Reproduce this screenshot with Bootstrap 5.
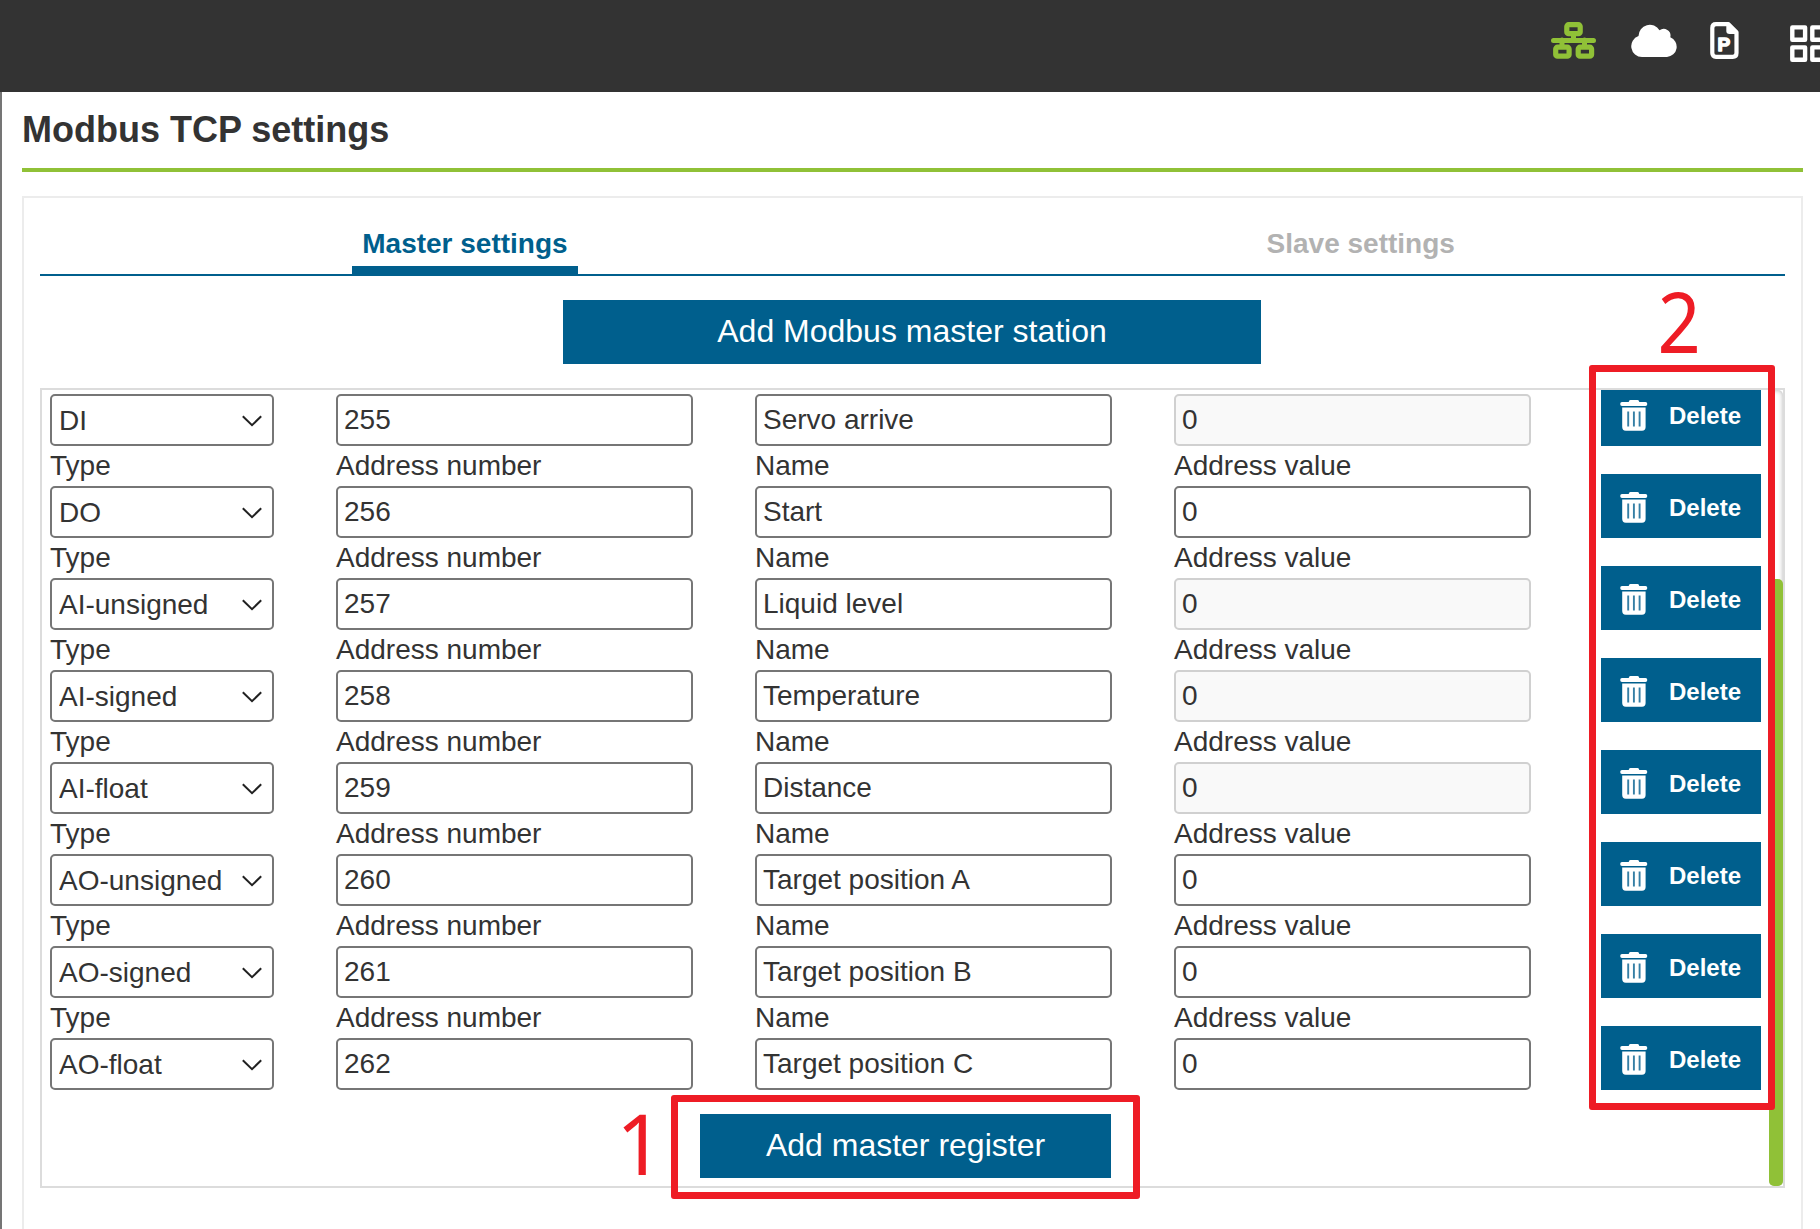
<!DOCTYPE html>
<html lang="en">
<head>
<meta charset="utf-8">
<title>Modbus TCP settings</title>
<link href="https://cdn.jsdelivr.net/npm/bootstrap@5.3.0/dist/css/bootstrap.min.css" rel="stylesheet">
<style>
:root{--blue:#005f8d;--green:#90c137;--ink:#333;--red:#ee1c25}
body{font-family:"Liberation Sans",Arial,sans-serif;font-size:28px;line-height:40px;color:var(--ink);background:#fff;width:1820px;height:1229px}
.topbar{height:92px;background:#333;flex:none}
.topbar svg{display:block;flex:none}
.topicons{padding:22px 0 0 1551px}
.icon-cloud{margin:2px 0 0 35px}
.icon-file{margin-left:32px}
.icon-grid{margin:3px 0 0 51px}
.page-main{border-left:2px solid #757575;padding:0 17px 0 20px;height:1137px}
.page-title{font-size:36px;font-weight:700;line-height:40px;padding:18px 0 18px;border-bottom:4px solid var(--green)}
.panel{border:2px solid #ececec;border-bottom:0;margin-top:24px;padding:26px 16px 0;height:1040px}
.tabline{border-bottom:2px solid var(--blue);height:52px}
.tabline .nav-item{flex:0 0 50%;max-width:50%}
.tabline .nav-item:first-child{padding-right:22px}
.tabline .nav-item:last-child{padding-left:26px}
.tabline .nav-link{color:#b2b2b2;font-weight:700;padding:0 12px 2px 10px;height:50px;line-height:40px;border-radius:0}
.tabline .nav-link.active{color:var(--blue);border-bottom:8px solid var(--blue);width:226px}
.btn-blue,.btn-blue:hover{background:var(--blue);color:#fff;border:0;border-radius:0;font-size:32px;line-height:40px;height:64px;padding:0 0 3px}
.add-station{width:698px;margin:24px 0 0 523px}
.add-register{width:411px;margin:24px 0 0 658px}
.listbox{border:2px solid #dcdcdc;height:800px;margin-top:24px}
.rows{margin-top:-36px;padding-left:8px}
.reg{height:92px;gap:62px}
.reg label{height:40px;line-height:40px;display:block}
.reg:first-child label{visibility:hidden}
.reg .form-control,.reg .form-select{height:52px;border:2px solid #767676;border-radius:5px;font-size:28px;line-height:46px;color:var(--ink);padding:0 6px;background-color:#fff}
.reg .form-control{width:357px}
.reg .form-control:disabled{background:#f9f9f9;border-color:#d0d0d0}
.reg .form-select{width:224px;padding:1px 0 0 7px;background-image:url("data:image/svg+xml,%3Csvg xmlns='http://www.w3.org/2000/svg' viewBox='0 0 20 12'%3E%3Cpath d='M.8 1.2 10 10.2 19.2 1.2' fill='none' stroke='%23222' stroke-width='2'/%3E%3C/svg%3E");background-size:20px 12px;background-position:190px 19px}
.reg .btn-blue{width:160px;font-size:24px;font-weight:700;margin:28px 0 0 8px;padding:2px 0 0 19px;gap:21px}
.reg .btn-blue span{padding-top:2px}
.track{right:0;top:0;width:14px;height:796px;border-radius:5px;box-shadow:inset 0 0 5px rgba(0,0,0,.3)}
.thumb{margin-top:189px;height:607px;border-radius:5px;background:var(--green)}
.callout-box{border:7px solid var(--red);border-radius:3px}
.box-one{left:671px;top:1095px;width:469px;height:104px}
.box-two{left:1589px;top:365px;width:186px;height:745px}
.digit{font:84px/84px "Noto Sans",sans-serif;color:var(--red)}
.digit-one{left:616px;top:1101px}
.digit-two{left:1655px;top:279px;transform:scaleX(.9)}
</style>
<script src="https://cdn.jsdelivr.net/npm/bootstrap@5.3.0/dist/js/bootstrap.bundle.min.js"></script>
</head>
<body class="position-relative overflow-hidden">
<header class="topbar overflow-hidden">
  <div class="topicons d-flex align-items-start">
    <svg width="45" height="37" viewBox="0 0 45 37" fill="none" stroke="#90c137"><path d="M2.500 18.500h40M22.500 12v6M11 18v6M33.500 18v6" stroke-width="5" stroke-linecap="round"/><g stroke-width="5.200" stroke-linejoin="round"><rect x="15.800" y="2.700" width="13.400" height="9" rx="1.800"/><rect x="4.700" y="25.200" width="13.400" height="9" rx="1.800"/><rect x="27.200" y="25.200" width="13.400" height="9" rx="1.800"/></g></svg>
    <svg class="icon-cloud" width="47" height="33" viewBox="0 0 47 33" fill="#fff"><path d="M11 33A10.800 10.800 0 0 1 7.500 12 11.300 11.300 0 0 1 28.500 6.300 6.800 6.800 0 0 1 39.300 13.200 10.300 10.300 0 0 1 36 33Z"/></svg>
    <svg class="icon-file" width="29" height="37" viewBox="0 0 29 37"><path d="M6 2.200H18.500L26.500 10.200V31Q26.500 34.800 22.700 34.800H6Q2.300 34.800 2.300 31V6Q2.300 2.200 6 2.200Z" fill="none" stroke="#fff" stroke-width="4.200" stroke-linejoin="round"/><path d="M16.300 1H19L28 10V12H19.500Q16.300 12 16.300 9Z" fill="#fff"/><text x="7.500" y="29" font-family="Liberation Sans" font-size="19" font-weight="700" fill="#fff" stroke="#fff" stroke-width="1.400" stroke-linejoin="round">P</text></svg>
    <svg class="icon-grid" width="38" height="37" viewBox="0 0 38 37" fill="none" stroke="#fff" stroke-width="4.400" stroke-linejoin="round"><rect x="2.300" y="2.400" width="12.800" height="12.300"/><rect x="22.300" y="2.400" width="12.800" height="12.300"/><rect x="2.300" y="22.400" width="12.800" height="12.300"/><rect x="22.300" y="22.400" width="12.800" height="12.300"/></svg>
  </div>
</header>
<main class="page-main">
  <h1 class="page-title m-0">Modbus TCP settings</h1>
  <section class="panel">
    <ul class="nav tabline">
      <li class="nav-item d-flex justify-content-center"><a class="nav-link active text-nowrap">Master settings</a></li>
      <li class="nav-item d-flex justify-content-center"><a class="nav-link text-nowrap">Slave settings</a></li>
    </ul>
    <button class="btn btn-blue add-station d-block">Add Modbus master station</button>
    <div class="listbox position-relative overflow-hidden">
      <div class="rows" id="rows"></div>
      <button class="btn btn-blue add-register d-block">Add master register</button>
      <div class="track position-absolute"><div class="thumb"></div></div>
    </div>
  </section>
</main>
<div class="callout-box box-one position-absolute"></div>
<div class="callout-box box-two position-absolute"></div>
<div class="digit digit-one position-absolute">1</div>
<div class="digit digit-two position-absolute">2</div>
<script>
const registers = [
  ["DI", 255, "Servo arrive", true], ["DO", 256, "Start", false],
  ["AI-unsigned", 257, "Liquid level", true], ["AI-signed", 258, "Temperature", true],
  ["AI-float", 259, "Distance", true], ["AO-unsigned", 260, "Target position A", false],
  ["AO-signed", 261, "Target position B", false], ["AO-float", 262, "Target position C", false]
];
document.getElementById("rows").innerHTML = registers.map(([type, addr, name, readOnly]) => `
  <div class="reg d-flex">
    <div><label>Type</label><select class="form-select"><option>${type}</option></select></div>
    <div><label>Address number</label><input class="form-control" value="${addr}"></div>
    <div><label>Name</label><input class="form-control" value="${name}"></div>
    <div><label>Address value</label><input class="form-control" value="0"${readOnly ? " disabled" : ""}></div>
    <button class="btn btn-blue d-flex align-items-center">
      <svg width="28" height="31" viewBox="0 0 28 31" fill="#fff"><path d="M9 1.200Q9.300 0 10.500 0H17.500Q18.700 0 19 1.200L19.300 2H25.500Q27.300 2 27.300 4T25.500 6H2Q.2 6 .2 4T2 2H8.700Z"/><path d="M2.200 7.600H25.600V27Q25.600 30.700 22 30.700H5.800Q2.200 30.700 2.200 27Z"/><path d="M8.200 11.500v15M13.900 11.500v15M19.600 11.500v15" stroke="#357fa5" stroke-width="1.900"/></svg>
      <span>Delete</span>
    </button>
  </div>`).join("");
</script>
</body>
</html>
